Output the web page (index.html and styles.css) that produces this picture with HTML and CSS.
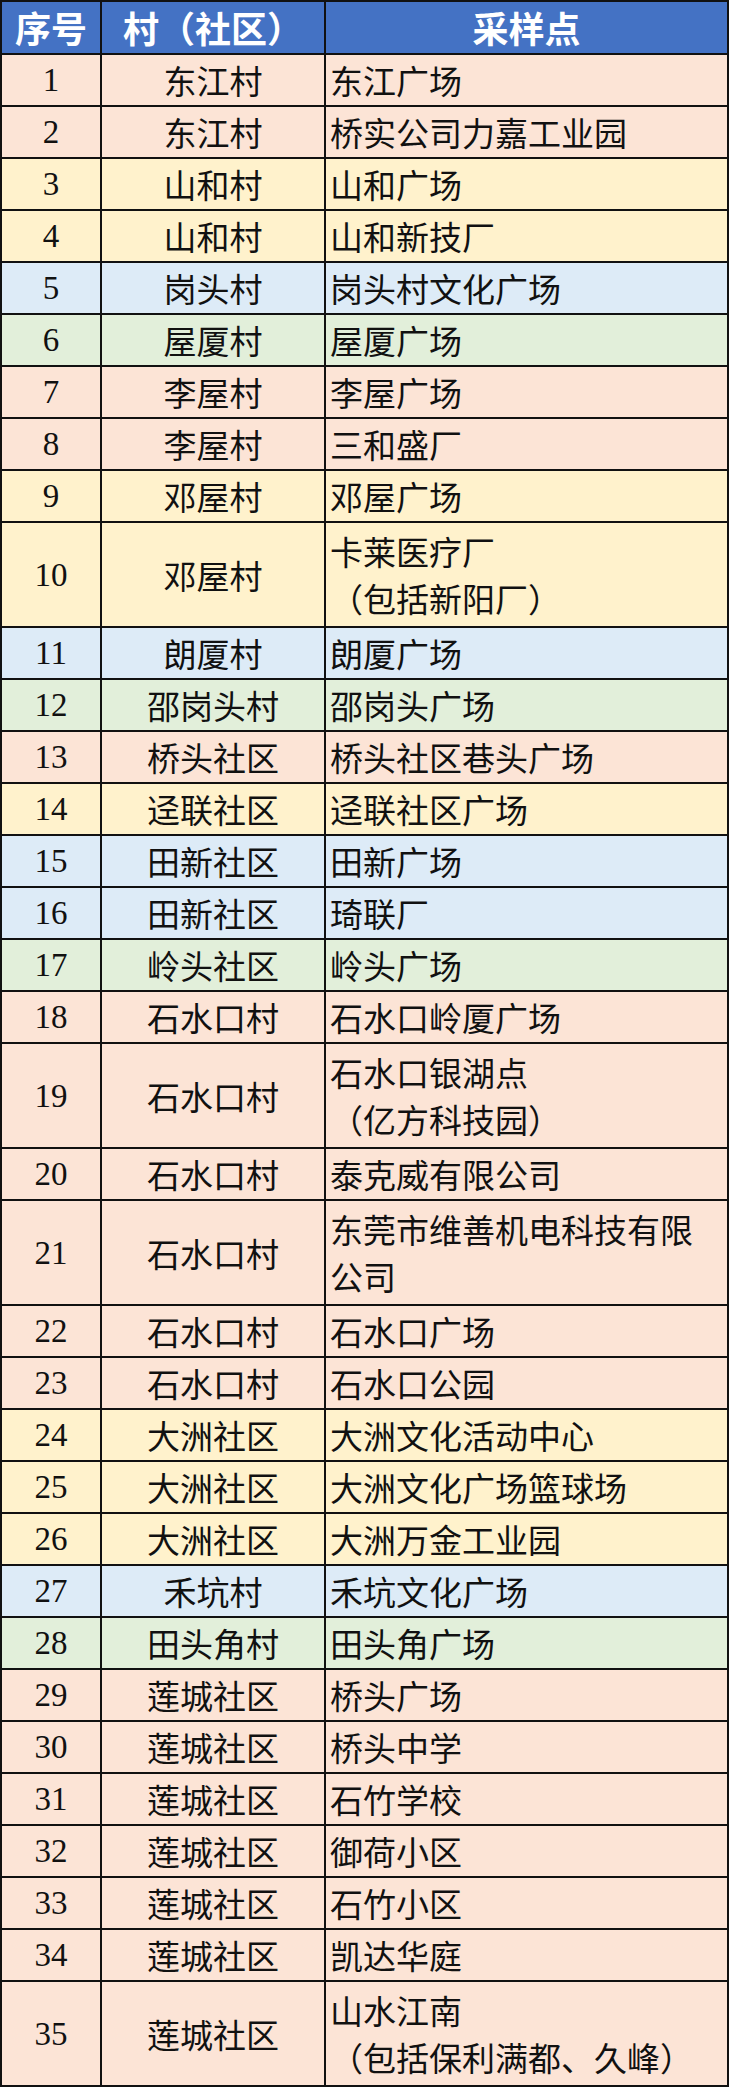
FILE: index.html
```html
<!DOCTYPE html>
<html lang="zh-CN">
<head>
<meta charset="utf-8">
<title>采样点</title>
<link rel="stylesheet" href="styles.css">
</head>
<body>
<table class="sheet">
  <colgroup>
    <col class="c-no">
    <col class="c-village">
    <col class="c-site">
  </colgroup>
  <thead>
    <tr class="head">
      <th>序号</th>
      <th>村（社区）</th>
      <th>采样点</th>
    </tr>
  </thead>
  <tbody>
    <tr class="peach"><td class="no">1</td><td class="vil">东江村</td><td class="site">东江广场</td></tr>
    <tr class="peach"><td class="no">2</td><td class="vil">东江村</td><td class="site">桥实公司力嘉工业园</td></tr>
    <tr class="yellow"><td class="no">3</td><td class="vil">山和村</td><td class="site">山和广场</td></tr>
    <tr class="yellow"><td class="no">4</td><td class="vil">山和村</td><td class="site">山和新技厂</td></tr>
    <tr class="blue"><td class="no">5</td><td class="vil">岗头村</td><td class="site">岗头村文化广场</td></tr>
    <tr class="green"><td class="no">6</td><td class="vil">屋厦村</td><td class="site">屋厦广场</td></tr>
    <tr class="peach"><td class="no">7</td><td class="vil">李屋村</td><td class="site">李屋广场</td></tr>
    <tr class="peach"><td class="no">8</td><td class="vil">李屋村</td><td class="site">三和盛厂</td></tr>
    <tr class="yellow"><td class="no">9</td><td class="vil">邓屋村</td><td class="site">邓屋广场</td></tr>
    <tr class="yellow tall"><td class="no">10</td><td class="vil">邓屋村</td><td class="site"><span class="ln">卡莱医疗厂</span><span class="ln">（包括新阳厂）</span></td></tr>
    <tr class="blue"><td class="no">11</td><td class="vil">朗厦村</td><td class="site">朗厦广场</td></tr>
    <tr class="green"><td class="no">12</td><td class="vil">邵岗头村</td><td class="site">邵岗头广场</td></tr>
    <tr class="peach"><td class="no">13</td><td class="vil">桥头社区</td><td class="site">桥头社区巷头广场</td></tr>
    <tr class="yellow"><td class="no">14</td><td class="vil">迳联社区</td><td class="site">迳联社区广场</td></tr>
    <tr class="blue"><td class="no">15</td><td class="vil">田新社区</td><td class="site">田新广场</td></tr>
    <tr class="blue"><td class="no">16</td><td class="vil">田新社区</td><td class="site">琦联厂</td></tr>
    <tr class="green"><td class="no">17</td><td class="vil">岭头社区</td><td class="site">岭头广场</td></tr>
    <tr class="peach"><td class="no">18</td><td class="vil">石水口村</td><td class="site">石水口岭厦广场</td></tr>
    <tr class="peach tall"><td class="no">19</td><td class="vil">石水口村</td><td class="site"><span class="ln">石水口银湖点</span><span class="ln">（亿方科技园）</span></td></tr>
    <tr class="peach"><td class="no">20</td><td class="vil">石水口村</td><td class="site">泰克威有限公司</td></tr>
    <tr class="peach tall"><td class="no">21</td><td class="vil">石水口村</td><td class="site"><span class="ln">东莞市维善机电科技有限</span><span class="ln">公司</span></td></tr>
    <tr class="peach"><td class="no">22</td><td class="vil">石水口村</td><td class="site">石水口广场</td></tr>
    <tr class="peach"><td class="no">23</td><td class="vil">石水口村</td><td class="site">石水口公园</td></tr>
    <tr class="yellow"><td class="no">24</td><td class="vil">大洲社区</td><td class="site">大洲文化活动中心</td></tr>
    <tr class="yellow"><td class="no">25</td><td class="vil">大洲社区</td><td class="site">大洲文化广场篮球场</td></tr>
    <tr class="yellow"><td class="no">26</td><td class="vil">大洲社区</td><td class="site">大洲万金工业园</td></tr>
    <tr class="blue"><td class="no">27</td><td class="vil">禾坑村</td><td class="site">禾坑文化广场</td></tr>
    <tr class="green"><td class="no">28</td><td class="vil">田头角村</td><td class="site">田头角广场</td></tr>
    <tr class="peach"><td class="no">29</td><td class="vil">莲城社区</td><td class="site">桥头广场</td></tr>
    <tr class="peach"><td class="no">30</td><td class="vil">莲城社区</td><td class="site">桥头中学</td></tr>
    <tr class="peach"><td class="no">31</td><td class="vil">莲城社区</td><td class="site">石竹学校</td></tr>
    <tr class="peach"><td class="no">32</td><td class="vil">莲城社区</td><td class="site">御荷小区</td></tr>
    <tr class="peach"><td class="no">33</td><td class="vil">莲城社区</td><td class="site">石竹小区</td></tr>
    <tr class="peach"><td class="no">34</td><td class="vil">莲城社区</td><td class="site">凯达华庭</td></tr>
    <tr class="peach tall"><td class="no">35</td><td class="vil">莲城社区</td><td class="site"><span class="ln">山水江南</span><span class="ln">（包括保利满都、久峰）</span></td></tr>
  </tbody>
</table>
</body>
</html>
```

FILE: styles.css
```css
html, body {
  margin: 0;
  padding: 0;
  background: #ffffff;
}

.sheet {
  border-collapse: separate;
  border-spacing: 0;
  table-layout: fixed;
  width: 729px;
  border-top: 2px solid #111;
  border-left: 2px solid #111;
  font-family: "Noto Sans CJK SC", sans-serif;
  color: #111;
  text-spacing-trim: space-all;
  font-feature-settings: "chws" 0, "halt" 0;
}

.c-no { width: 100px; }
.c-village { width: 224px; }
.c-site { width: 403px; }

.sheet th,
.sheet td {
  padding: 0;
  border-right: 2px solid #111;
  border-bottom: 2px solid #111;
  box-sizing: content-box;
  white-space: nowrap;
  overflow: hidden;
}

.head th {
  height: 51px;
  background: #4472c4;
  color: #ffffff;
  font-weight: 700;
  font-size: 36px;
  line-height: 51px;
  text-align: center;
}

.sheet td {
  height: 50px;
  font-size: 33px;
  line-height: 50px;
  vertical-align: middle;
}

.tall td {
  height: 103px;
}

.no {
  text-align: center;
  font-family: "Liberation Serif", serif;
}

.vil {
  text-align: center;
}

.site {
  text-align: left;
  padding-left: 4px !important;
}

.ln {
  display: block;
  line-height: 47px;
}

.peach td { background: #fce4d6; }
.yellow td { background: #fff2cc; }
.blue td { background: #ddebf7; }
.green td { background: #e2efda; }
```
